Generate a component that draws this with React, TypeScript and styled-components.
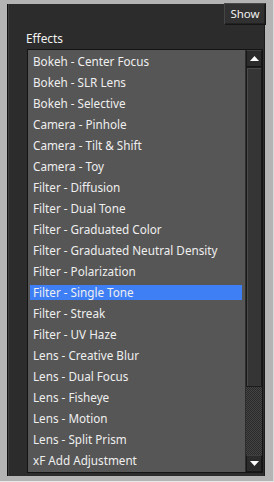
import React from 'react'
import styled, { createGlobalStyle } from 'styled-components'

const GlobalStyle = createGlobalStyle`
    html, body {
        margin: 0;
        padding: 0;
        background: #b4b4b4;
    }
    body {
        font-family: 'Noto Sans', 'DejaVu Sans', sans-serif;
    }
`

const Frame = styled.div`
    width: 274px;
    height: 482px;
    box-sizing: border-box;
    padding: 4px 8px 5px 7px;
    background: #b4b4b4;
    border-right: 1px solid #d8d8d8;
    border-bottom: 1px solid #e8e8e8;
`

const Panel = styled.div`
    height: 100%;
    box-sizing: border-box;
    background: #2c2c2c;
    border-left: 1px solid #111;
    box-shadow: inset 1px 0 0 #3d3d3d, inset -1px 0 0 #1a1a1a;
    display: flex;
    flex-direction: column;
    padding: 0 2px 3px 19px;
`

const TopBar = styled.div`
    display: flex;
    justify-content: flex-end;
    height: 20px;
    margin-right: -3px;
`

const ShowButton = styled.button`
    height: 22px;
    width: 42px;
    padding: 0 0 1px;
    margin-top: -1px;
    background: #313131;
    color: #f0f0f0;
    font-family: 'Noto Sans', 'DejaVu Sans', sans-serif;
    font-size: 11.5px;
    border: 1px solid #161616;
    border-top-color: #4a4a4a;
    border-left-color: #454545;
    box-shadow: inset -1px -1px 0 #222;
`

const Label = styled.div`
    color: #f2f2f2;
    font-size: 11.8px;
    line-height: 14px;
    margin: 7px 0 4px -1px;
`

const ListBox = styled.div`
    flex: 1;
    display: flex;
    border: 1px solid #141414;
    background: #565656;
    overflow: hidden;
`

const Items = styled.ul`
    flex: 1;
    display: flex;
    flex-direction: column;
    gap: 6px;
    list-style: none;
    margin: 0;
    padding: 4px 3px 0 2px;
`

const Item = styled.li<{ selected?: boolean }>`
    flex: none;
    height: 15px;
    padding-left: 3px;
    line-height: 15px;
    font-size: 11.7px;
    white-space: nowrap;
    color: #efefef;
    background: ${p => (p.selected ? '#3f7ff5' : 'transparent')};
`

const ScrollBar = styled.div`
    width: 16px;
    display: flex;
    flex-direction: column;
    background-color: #2a2a2a;
    background-image: repeating-conic-gradient(#444 0 25%, #2a2a2a 0 50%);
    background-size: 2px 2px;
    border-left: 1px solid #2d2d2d;
`

const Arrow = styled.div`
    height: 15px;
    display: flex;
    align-items: center;
    justify-content: center;
    background: #2b2b2b;
    border: 1px solid #161616;
    border-top-color: #3e3e3e;
`

const Thumb = styled.div`
    height: 318px;
    background: #353535;
    border: 1px solid #1b1b1b;
    box-shadow: inset 1px 1px 0 #4a4a4a;
`

const Spacer = styled.div`
    flex: 1;
`

const Tri = ({ up }: { up?: boolean }) => (
    <svg width="9" height="5" viewBox="0 0 9 5">
        <path d={up ? 'M0 5 L4.5 0 L9 5 Z' : 'M0 0 L9 0 L4.5 5 Z'} fill="#fff" />
    </svg>
)

const effects = [
    'Bokeh - Center Focus',
    'Bokeh - SLR Lens',
    'Bokeh - Selective',
    'Camera - Pinhole',
    'Camera - Tilt & Shift',
    'Camera - Toy',
    'Filter - Diffusion',
    'Filter - Dual Tone',
    'Filter - Graduated Color',
    'Filter - Graduated Neutral Density',
    'Filter - Polarization',
    'Filter - Single Tone',
    'Filter - Streak',
    'Filter - UV Haze',
    'Lens - Creative Blur',
    'Lens - Dual Focus',
    'Lens - Fisheye',
    'Lens - Motion',
    'Lens - Split Prism',
    'xF Add Adjustment',
]

export default function App() {
    return (
        <>
            <GlobalStyle />
            <Frame>
                <Panel>
                    <TopBar>
                        <ShowButton>Show</ShowButton>
                    </TopBar>
                    <Label>Effects</Label>
                    <ListBox>
                        <Items>
                            {effects.map(name => (
                                <Item key={name} selected={name === 'Filter - Single Tone'}>
                                    {name}
                                </Item>
                            ))}
                        </Items>
                        <ScrollBar>
                            <Arrow><Tri up /></Arrow>
                            <Thumb />
                            <Spacer />
                            <Arrow><Tri /></Arrow>
                        </ScrollBar>
                    </ListBox>
                </Panel>
            </Frame>
        </>
    )
}
